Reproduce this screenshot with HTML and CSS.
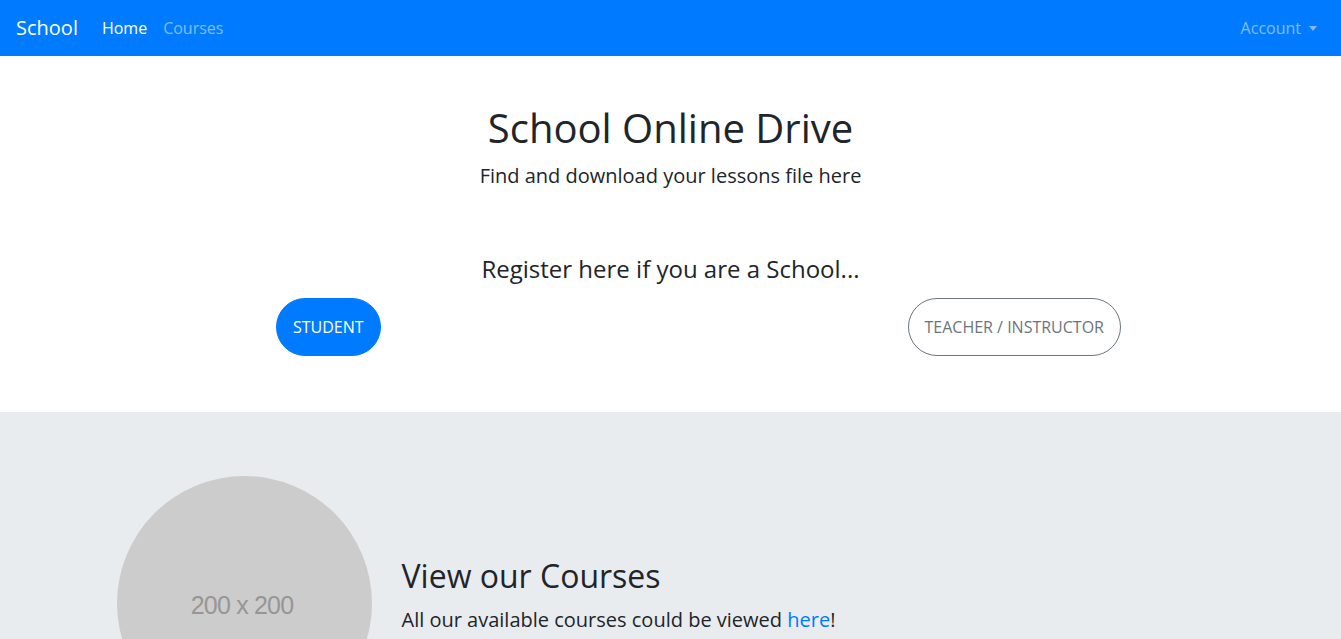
FILE: index.html
```html
<!DOCTYPE html>
<html lang="en">
<head>
<meta charset="utf-8">
<title>School</title>
<link rel="stylesheet" href="styles.css">
</head>
<body>
<nav class="navbar">
  <a class="brand" href="#">School</a>
  <ul class="nav">
    <li><a class="nav-link active" href="#">Home</a></li>
    <li><a class="nav-link" href="#">Courses</a></li>
  </ul>
  <a class="nav-link account" href="#">Account<span class="caret"></span></a>
</nav>

<section class="hero">
  <h1 class="title">School Online Drive</h1>
  <p class="lead">Find and download your lessons file here</p>
  <h4 class="register">Register here if you are a School...</h4>
  <div class="btn-row">
    <a class="btn btn-primary" href="#">STUDENT</a>
    <a class="btn btn-outline" href="#">TEACHER / INSTRUCTOR</a>
  </div>
</section>

<section class="courses">
  <div class="container">
    <div class="media-col">
      <div class="placeholder"><span>200 x 200</span></div>
    </div>
    <div class="text-col">
      <h2 class="courses-title">View our Courses</h2>
      <p class="courses-text">All our available courses could be viewed <a href="#">here</a>!</p>
    </div>
  </div>
</section>
</body>
</html>
```

FILE: styles.css
```css
* { box-sizing: border-box; }
html, body { margin: 0; padding: 0; }
body {
  font-family: "Open Sans", "Noto Sans", sans-serif;
  font-size: 16px;
  line-height: 1.5;
  color: #212529;
  background: #fff;
}
a { text-decoration: none; }

.navbar {
  display: flex;
  align-items: center;
  height: 56px;
  padding: 0 16px;
  background: #007bff;
}
.brand {
  color: #fff;
  font-size: 20px;
  line-height: 30px;
  margin-right: 16px;
}
.nav {
  display: flex;
  list-style: none;
  margin: 0;
  padding: 0;
  flex: 1;
}
.nav-link {
  display: block;
  padding: 8px;
  color: rgba(255,255,255,0.5);
  font-size: 16px;
}
.nav-link.active { color: #fff; }
.account { display: flex; align-items: center; padding-left: 10px; }
.caret {
  display: inline-block;
  margin-left: 8px;
  margin-top: 1px;
  width: 0; height: 0;
  border-top: 5px solid rgba(255,255,255,0.5);
  border-left: 4.5px solid transparent;
  border-right: 4.5px solid transparent;
}

.hero {
  text-align: center;
  padding: 48px 0 56px;
}
.title {
  font-size: 40px;
  font-weight: 400;
  line-height: 1.2;
  margin: 0 0 9px;
}
.lead {
  font-size: 20px;
  font-weight: 400;
  margin: 0;
}
.register {
  font-size: 24px;
  font-weight: 400;
  line-height: 1.2;
  margin: 64px 0 14px;
}
.btn-row {
  display: flex;
  justify-content: space-between;
  width: 845px;
  margin-left: calc(50% - 394.5px);
}
.btn {
  display: inline-block;
  font-size: 16px;
  line-height: 24px;
  padding: 16px 16px;
  border-radius: 30px;
  border: 1px solid transparent;
}
.btn-primary {
  background: #007bff;
  border-color: #007bff;
  color: #fff;
}
.btn-outline {
  background: transparent;
  border-color: #6c757d;
  color: #6c757d;
}

.courses {
  background: #e9ecef;
  padding: 64px 0 64px;
}
.container {
  width: 1140px;
  margin: 0 auto;
  display: flex;
  align-items: center;
}
.media-col {
  width: 285px;
  padding: 0 14px 0 16px;
}
.placeholder {
  width: 255px;
  height: 255px;
  border-radius: 50%;
  background: #cccccc;
  display: flex;
  align-items: center;
  justify-content: center;
}
.placeholder span {
  font-family: "Liberation Sans", Arial, sans-serif;
  font-size: 25px;
  letter-spacing: -0.8px;
  color: #969696;
  margin-top: 4px;
  margin-left: -4px;
}
.text-col {
  flex: 1;
  padding: 0 15px 0 16px;
}
.courses-title {
  font-size: 32px;
  font-weight: 400;
  line-height: 1.2;
  margin: 0 0 10px;
}
.courses-text {
  font-size: 20px;
  margin: 0 0 14px;
}
.courses-text a { color: #007bff; }
```
